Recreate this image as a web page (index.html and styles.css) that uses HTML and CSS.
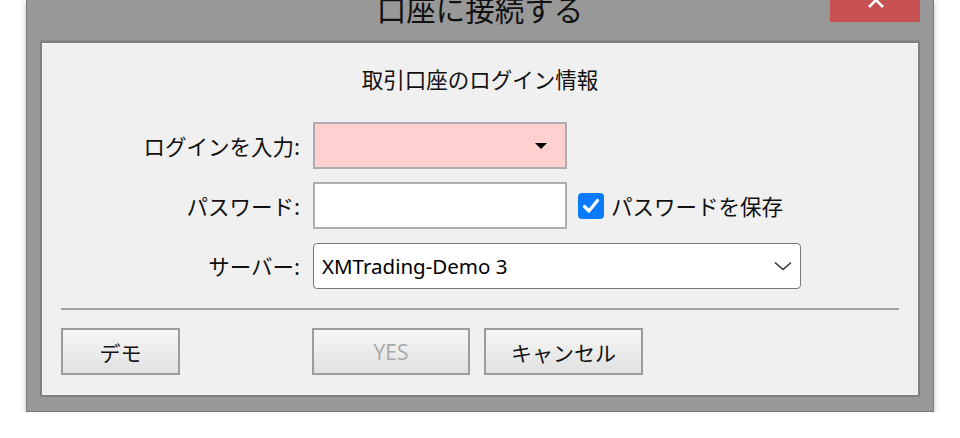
FILE: index.html
```html
<!DOCTYPE html>
<html lang="ja">
<head>
    <meta charset="UTF-8">
    <meta name="viewport" content="width=device-width, initial-scale=1.0">
    <title>口座に接続する</title>
    <link rel="stylesheet" href="styles.css">
</head>
<body>
    <div class="window">
        <div class="titlebar">
            <div class="title">口座に接続する</div>
            <button class="close" aria-label="閉じる">
                <svg width="90" height="22" viewBox="0 0 90 22">
                    <path d="M39 -7 L53 7 M53 -7 L39 7" stroke="#fff" stroke-width="2.6" fill="none"/>
                </svg>
            </button>
        </div>
        <div class="panel">
            <div class="heading">取引口座のログイン情報</div>

            <div class="form">
                <div class="row">
                    <label class="label">ログインを入力:</label>
                    <div class="field login">
                        <svg class="caret" width="12" height="6" viewBox="0 0 12 6">
                            <path d="M0 0 H12 L6 6 Z" fill="#000"/>
                        </svg>
                    </div>
                </div>
                <div class="row row-pass">
                    <label class="label">パスワード:</label>
                    <div class="field"></div>
                    <div class="save">
                        <span class="check">
                            <svg width="26" height="26" viewBox="0 0 26 26">
                                <path d="M6.5 13.5 L11 18 L19.5 7.5" stroke="#fff" stroke-width="3.2" fill="none" stroke-linecap="round" stroke-linejoin="round"/>
                            </svg>
                        </span>
                        <span>パスワードを保存</span>
                    </div>
                </div>
                <div class="row row-server">
                    <label class="label">サーバー:</label>
                    <div class="select">
                        <span class="select-text">XMTrading-Demo 3</span>
                        <svg width="18" height="10" viewBox="0 0 18 10">
                            <path d="M1 1.5 L9 8.5 L17 1.5" stroke="#333" stroke-width="1.6" fill="none"/>
                        </svg>
                    </div>
                </div>
            </div>

            <div class="separator"></div>

            <div class="buttons">
                <button class="btn btn-demo">デモ</button>
                <div class="btn-group">
                    <button class="btn btn-yes" disabled>YES</button>
                    <button class="btn">キャンセル</button>
                </div>
            </div>
        </div>
    </div>
</body>
</html>
```

FILE: styles.css
```css
body {
    margin: 0;
    padding: 0;
    background-color: #fff;
    font-family: "Noto Sans CJK JP", "Noto Sans", sans-serif;
    color: #111;
}

.window {
    position: relative;
    margin-left: 26px;
    width: 908px;
    box-sizing: border-box;
    background-color: #989898;
    border: 1px solid #7a7a7a;
    border-top: none;
    padding: 0 13px 14px;
    box-shadow: 0 2px 6px rgba(0, 0, 0, 0.25);
}

.titlebar {
    display: flow-root;
    height: 40px;
    border-bottom: 1px solid #8a8a8a;
    text-align: center;
}

.title {
    font-size: 29.5px;
    line-height: 30px;
    margin-top: -7px;
    color: #111;
}

.close {
    position: absolute;
    top: 0;
    right: 13px;
    width: 90px;
    height: 22px;
    padding: 0;
    border: none;
    background-color: #c75050;
    overflow: hidden;
}

.close svg {
    display: block;
}

.panel {
    height: 356px;
    box-sizing: border-box;
    background-color: #f0f0f0;
    border: 2px solid #7e7e7e;
    padding: 21px 19px 0;
}

.heading {
    text-align: center;
    font-size: 21.5px;
    line-height: 30px;
}

.form {
    display: flex;
    flex-direction: column;
    gap: 13px;
    margin-top: 28px;
}

.row {
    display: flex;
    align-items: center;
}

.row-server {
    margin-top: 1px;
}

.label {
    width: 239px;
    margin-right: 13px;
    text-align: right;
    font-size: 21.5px;
    line-height: 30px;
}

.field {
    width: 254px;
    height: 47px;
    box-sizing: border-box;
    border: 2px solid #acacb2;
    background-color: #fff;
    display: flex;
    align-items: center;
    justify-content: flex-end;
}

.login {
    background-color: #ffd0d0;
}

.caret {
    margin-right: 18px;
}

.save {
    display: flex;
    align-items: center;
    gap: 7px;
    margin-left: 11px;
    font-size: 21.5px;
    line-height: 30px;
}

.check {
    width: 26px;
    height: 26px;
    border-radius: 4px;
    background-color: #0a7aff;
    display: flex;
}

.select {
    width: 488px;
    height: 46px;
    box-sizing: border-box;
    border: 1.5px solid #777;
    border-radius: 4px;
    background-color: #fff;
    display: flex;
    align-items: center;
    justify-content: space-between;
    padding: 0 8px 0 8px;
}

.select-text {
    font-family: "Noto Sans", "Open Sans", sans-serif;
    font-size: 20.5px;
    color: #000;
}

.separator {
    height: 2px;
    background-color: #a4a4a4;
    margin-top: 19px;
}

.buttons {
    display: flex;
    margin-top: 18px;
}

.btn-group {
    display: flex;
    gap: 14px;
    margin-left: 132px;
}

.btn {
    width: 159px;
    height: 47px;
    box-sizing: border-box;
    border: 2px solid #9c9c9c;
    background: linear-gradient(#f6f6f6, #e1e1e1);
    font-family: "Noto Sans CJK JP", sans-serif;
    font-size: 21px;
    color: #111;
    padding: 0;
}

.btn-demo {
    width: 119px;
}

.btn-yes {
    width: 158px;
    color: #a8a8a8;
    font-family: "Open Sans", "Noto Sans", sans-serif;
}
```
